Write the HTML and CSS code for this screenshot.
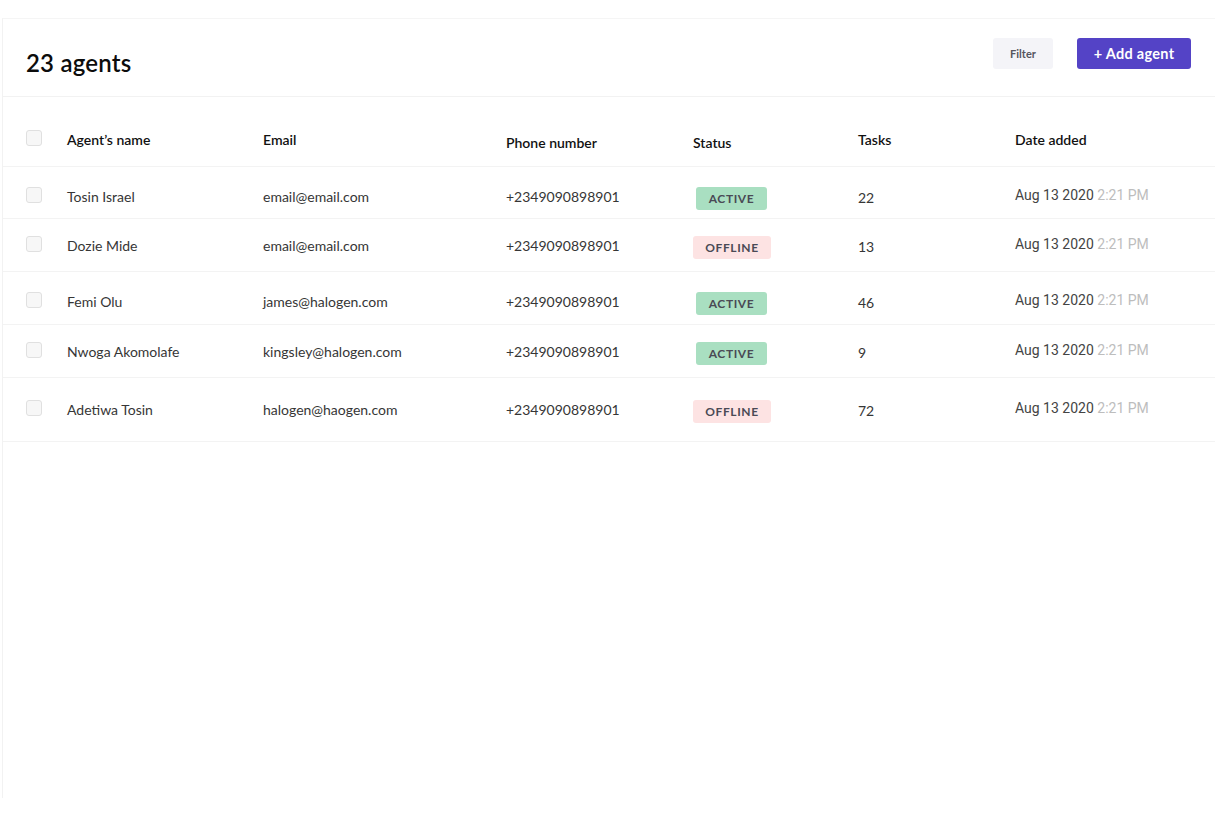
FILE: index.html
```html
<!DOCTYPE html>
<html>
<head>
<meta charset="utf-8">
<link rel="stylesheet" href="styles.css">
</head>
<body>
<div class="panel">
  <div class="topbar">
    <h1 class="title">23 agents</h1>
    <div class="actions">
      <button class="btn-filter">Filter</button>
      <button class="btn-add">+ Add agent</button>
    </div>
  </div>
  <div class="table">
    <div class="row head">
      <div class="c-check"><span class="box"></span></div>
      <div class="c-name">Agent’s name</div>
      <div class="c-email">Email</div>
      <div class="c-phone low">Phone number</div>
      <div class="c-status low">Status</div>
      <div class="c-tasks">Tasks</div>
      <div class="c-date">Date added</div>
    </div>
    <div class="row body r1">
      <div class="c-check"><span class="box"></span></div>
      <div class="c-name">Tosin Israel</div>
      <div class="c-email">email@email.com</div>
      <div class="c-phone">+2349090898901</div>
      <div class="c-status"><span class="badge active">ACTIVE</span></div>
      <div class="c-tasks">22</div>
      <div class="c-date">Aug 13 2020 <span class="time">2:21 PM</span></div>
    </div>
    <div class="row body r2">
      <div class="c-check"><span class="box"></span></div>
      <div class="c-name">Dozie Mide</div>
      <div class="c-email">email@email.com</div>
      <div class="c-phone">+2349090898901</div>
      <div class="c-status"><span class="badge offline">OFFLINE</span></div>
      <div class="c-tasks">13</div>
      <div class="c-date">Aug 13 2020 <span class="time">2:21 PM</span></div>
    </div>
    <div class="row body r3">
      <div class="c-check"><span class="box"></span></div>
      <div class="c-name">Femi Olu</div>
      <div class="c-email">james@halogen.com</div>
      <div class="c-phone">+2349090898901</div>
      <div class="c-status"><span class="badge active">ACTIVE</span></div>
      <div class="c-tasks">46</div>
      <div class="c-date">Aug 13 2020 <span class="time">2:21 PM</span></div>
    </div>
    <div class="row body r4">
      <div class="c-check"><span class="box"></span></div>
      <div class="c-name">Nwoga Akomolafe</div>
      <div class="c-email">kingsley@halogen.com</div>
      <div class="c-phone">+2349090898901</div>
      <div class="c-status"><span class="badge active">ACTIVE</span></div>
      <div class="c-tasks">9</div>
      <div class="c-date">Aug 13 2020 <span class="time">2:21 PM</span></div>
    </div>
    <div class="row body r5">
      <div class="c-check"><span class="box"></span></div>
      <div class="c-name">Adetiwa Tosin</div>
      <div class="c-email">halogen@haogen.com</div>
      <div class="c-phone">+2349090898901</div>
      <div class="c-status"><span class="badge offline">OFFLINE</span></div>
      <div class="c-tasks">72</div>
      <div class="c-date">Aug 13 2020 <span class="time">2:21 PM</span></div>
    </div>
  </div>
</div>
</body>
</html>
```
FILE: styles.css
```css
* { box-sizing: border-box; }
html, body { margin: 0; padding: 0; background: #ffffff; }
body {
  font-family: "Lato", "Noto Sans", sans-serif;
  color: #363636;
  padding-top: 18px;
  padding-left: 2px;
}
.panel {
  height: 780px;
  border-top: 1px solid #f5f5f5;
  border-left: 1px solid #f2f2f2;
}
.topbar {
  height: 78px;
  display: flex;
  align-items: flex-start;
  justify-content: space-between;
  border-bottom: 1px solid #f2f2f2;
  padding: 0 24px 0 23px;
}
.title {
  margin: 30px 0 0 0;
  font-size: 24px;
  line-height: 28px;
  font-weight: 600;
  color: #0c0c0c;
  letter-spacing: 0.2px;
}
.actions {
  display: flex;
  gap: 24px;
  margin-top: 19px;
}
.btn-filter, .btn-add {
  border: none;
  height: 31px;
  border-radius: 3px;
  font-family: inherit;
  cursor: pointer;
}
.btn-filter {
  width: 60px;
  background: #f4f4f8;
  color: #55555e;
  font-size: 11px;
  font-weight: 700;
}
.btn-add {
  width: 114px;
  background: #5443c6;
  color: #ffffff;
  font-size: 14.5px;
  font-weight: 700;
  letter-spacing: 0.3px;
}
.row {
  display: flex;
  align-items: flex-start;
  border-bottom: 1px solid #f3f3f3;
  padding-left: 23px;
  font-size: 14px;
  line-height: 20px;
}
.head {
  height: 70px;
  padding-top: 33px;
  color: #111111;
  font-weight: 600;
}
.head .low { margin-top: 3px; }
.body { padding-top: 20px; }
.r1 { height: 52px; }
.r2 { height: 53px; padding-top: 17px; }
.r3 { height: 53px; padding-top: 20px; }
.r4 { height: 53px; padding-top: 17px; }
.r5 { height: 64px; padding-top: 22px; }
.c-check { width: 41px; }
.box {
  display: block;
  width: 16px;
  height: 16px;
  border: 1px solid #e0e0e0;
  background: #f7f7f7;
  border-radius: 3px;
}
.c-name { width: 196px; }
.c-email { width: 243px; }
.c-phone { width: 187px; }
.c-status { width: 165px; }
.c-tasks { width: 157px; }
.c-date { flex: 1; }
.body .c-tasks { margin-top: 1px; }
.body .c-date {
  font-family: "Roboto", "Liberation Sans", sans-serif;
  margin-top: -2px;
  color: #444444;
}
.time { color: #bdbdbd; }
.badge {
  display: inline-block;
  height: 23px;
  line-height: 23px;
  border-radius: 3px;
  font-size: 12px;
  font-weight: 700;
  letter-spacing: 0.6px;
  color: #4a4a55;
  text-align: center;
}
.active {
  width: 71px;
  margin-left: 3px;
  background: #a9dfc1;
}
.offline {
  width: 78px;
  background: #fde3e3;
}
```
